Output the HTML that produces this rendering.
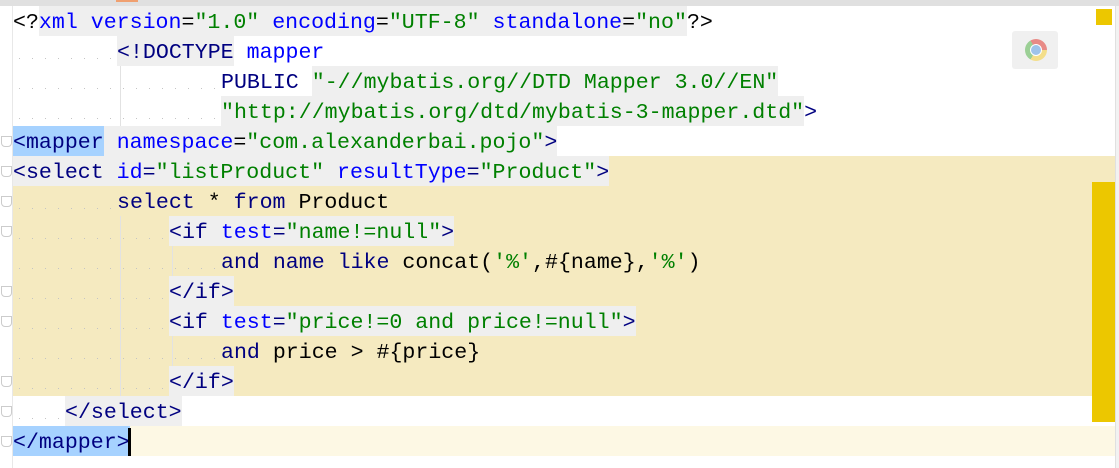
<!DOCTYPE html>
<html><head><meta charset="utf-8">
<style>
html,body{margin:0;padding:0;width:1119px;height:468px;overflow:hidden;background:#fff;position:relative}
.top{position:absolute;left:0;top:0;width:1119px;height:6px;background:#e0e0e0}
.org{position:absolute;left:116px;top:0;width:22px;height:2px;background:#f0a070}
.gut{position:absolute;left:0;top:6px;width:12px;height:462px;background:#fff;border-right:1px solid #e8e8e8}
.row{position:absolute;left:13px;height:30px;width:1106px}
.ln{position:absolute;top:0;height:30px;line-height:34px;overflow:hidden;font-family:"Liberation Mono",monospace;font-size:21.6px;white-space:pre;color:#000}
.g{background:#efefef}
.sel{background:#a6d2ff}
span.g,span.sel{display:inline-block;height:30px;vertical-align:top}
.n{color:#000080}
.b{color:#0000ff}
.s{color:#008000}
.dots{position:absolute;height:1px;background-image:linear-gradient(to right,#c4c4c4 1px,transparent 1px);background-size:13px 1px;background-position:6px 0}
.vg{position:absolute;width:1px;background:#e2e2e2}
.fold{position:absolute;left:1px;width:9px;height:9px;border:1px solid #ccc;background:#fff;border-radius:0 0 4px 4px}
</style></head><body>
<div class="top"></div><div class="org"></div>
<div class="gut"></div>
<div style="position:absolute;left:13px;top:156px;width:1102px;height:240px;background:#f5eac0"></div>
<div style="position:absolute;left:13px;top:426px;width:1102px;height:30px;background:#fdf8e4"></div>
<div style="position:absolute;left:1115px;top:6px;width:4px;height:462px;background:#f2f2f2;border-left:1px solid #e0e0e0"></div>
<div style="position:absolute;left:1096px;top:9px;width:16px;height:16px;background:#ecc700"></div>
<div style="position:absolute;left:1092px;top:182px;width:23px;height:240px;background:#ecc700"></div>
<div style="position:absolute;left:1012px;top:31px;width:46px;height:38px;background:#f0f0f0;border-radius:3px"></div>
<div style="position:absolute;left:1025px;top:39px;width:22px;height:22px;border-radius:50%;background:conic-gradient(from -30deg,#e88a86 0 120deg,#f3de8a 120deg 240deg,#9bcf95 240deg 360deg)"></div>
<div style="position:absolute;left:1031px;top:45px;width:10px;height:10px;border-radius:50%;background:#9ec3ea;border:1px solid #fff;margin:-1px"></div>

<div class="vg" style="left:120px;top:66px;height:60px"></div>
<div class="vg" style="left:120px;top:216px;height:180px"></div>
<div class="vg" style="left:172px;top:246px;height:30px"></div>
<div class="vg" style="left:172px;top:336px;height:30px"></div>

<div class="dots" style="left:13px;top:58px;width:104px"></div>
<div class="dots" style="left:13px;top:88px;width:208px"></div>
<div class="dots" style="left:13px;top:118px;width:208px"></div>
<div class="dots" style="left:13px;top:208px;width:104px"></div>
<div class="dots" style="left:13px;top:238px;width:156px"></div>
<div class="dots" style="left:13px;top:268px;width:208px"></div>
<div class="dots" style="left:13px;top:298px;width:156px"></div>
<div class="dots" style="left:13px;top:328px;width:156px"></div>
<div class="dots" style="left:13px;top:358px;width:208px"></div>
<div class="dots" style="left:13px;top:388px;width:156px"></div>
<div class="dots" style="left:13px;top:418px;width:52px"></div>

<div class="fold" style="top:136px"></div>
<div class="fold" style="top:166px"></div>
<div class="fold" style="top:196px"></div>
<div class="fold" style="top:226px"></div>
<div class="fold" style="top:286px"></div>
<div class="fold" style="top:316px"></div>
<div class="fold" style="top:376px"></div>
<div class="fold" style="top:406px"></div>
<div class="fold" style="top:436px"></div>

<div class="row" style="top:6px"><div class="ln" style="left:0">&lt;?<span class="g"><span class="b">xml version</span>=<span class="s">"1.0"</span> <span class="b">encoding</span>=<span class="s">"UTF-8"</span> <span class="b">standalone</span>=<span class="s">"no"</span></span>?&gt;</div></div>
<div class="row" style="top:36px"><div class="ln" style="left:104px"><span class="g n">&lt;!DOCTYPE</span> <span class="b">mapper</span></div></div>
<div class="row" style="top:66px"><div class="ln" style="left:208px"><span class="n">PUBLIC</span> <span class="g s">"-//mybatis.org//DTD Mapper 3.0//EN"</span></div></div>
<div class="row" style="top:96px"><div class="ln" style="left:208px"><span class="g s">"http://mybatis.org/dtd/mybatis-3-mapper.dtd"</span><span class="n">&gt;</span></div></div>
<div class="row" style="top:126px"><div class="ln g" style="left:0"><span class="sel n">&lt;mapper</span> <span class="b">namespace</span>=<span class="s">"com.alexanderbai.pojo"</span><span class="n">&gt;</span></div></div>
<div class="row" style="top:156px"><div class="ln g n" style="left:0">&lt;select <span class="b">id</span>=<span class="s">"listProduct"</span> <span class="b">resultType</span>=<span class="s">"Product"</span>&gt;</div></div>
<div class="row" style="top:186px"><div class="ln" style="left:104px"><span class="n">select</span> * <span class="n">from</span> Product</div></div>
<div class="row" style="top:216px"><div class="ln g n" style="left:156px">&lt;if <span class="b">test</span>=<span class="s">"name!=null"</span>&gt;</div></div>
<div class="row" style="top:246px"><div class="ln" style="left:208px"><span class="n">and name like</span> concat(<span class="s">'%'</span>,#{name},<span class="s">'%'</span>)</div></div>
<div class="row" style="top:276px"><div class="ln g n" style="left:156px">&lt;/if&gt;</div></div>
<div class="row" style="top:306px"><div class="ln g n" style="left:156px">&lt;if <span class="b">test</span>=<span class="s">"price!=0 and price!=null"</span>&gt;</div></div>
<div class="row" style="top:336px"><div class="ln" style="left:208px"><span class="n">and</span> price &gt; #{price}</div></div>
<div class="row" style="top:366px"><div class="ln g n" style="left:156px">&lt;/if&gt;</div></div>
<div class="row" style="top:396px"><div class="ln g n" style="left:52px">&lt;/select&gt;</div></div>
<div class="row" style="top:426px"><div class="ln sel n" style="left:0">&lt;/mapper&gt;</div></div>
<div style="position:absolute;left:128px;top:428px;width:3px;height:28px;background:#000"></div>
</body></html>
